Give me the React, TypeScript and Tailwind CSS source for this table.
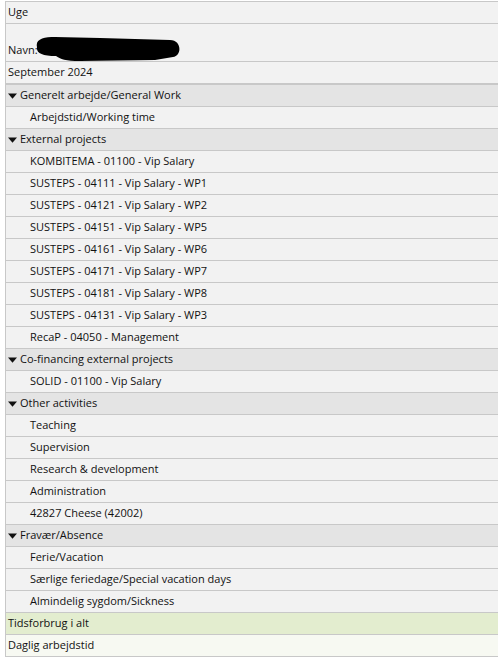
import React from "react";

type Row =
  | { kind: "group"; label: string }
  | { kind: "item"; label: string };

const rows: Row[] = [
  { kind: "group", label: "Generelt arbejde/General Work" },
  { kind: "item", label: "Arbejdstid/Working time" },
  { kind: "group", label: "External projects" },
  { kind: "item", label: "KOMBITEMA - 01100 - Vip Salary" },
  { kind: "item", label: "SUSTEPS - 04111 - Vip Salary - WP1" },
  { kind: "item", label: "SUSTEPS - 04121 - Vip Salary - WP2" },
  { kind: "item", label: "SUSTEPS - 04151 - Vip Salary - WP5" },
  { kind: "item", label: "SUSTEPS - 04161 - Vip Salary - WP6" },
  { kind: "item", label: "SUSTEPS - 04171 - Vip Salary - WP7" },
  { kind: "item", label: "SUSTEPS - 04181 - Vip Salary - WP8" },
  { kind: "item", label: "SUSTEPS - 04131 - Vip Salary - WP3" },
  { kind: "item", label: "RecaP - 04050 - Management" },
  { kind: "group", label: "Co-financing external projects" },
  { kind: "item", label: "SOLID - 01100 - Vip Salary" },
  { kind: "group", label: "Other activities" },
  { kind: "item", label: "Teaching" },
  { kind: "item", label: "Supervision" },
  { kind: "item", label: "Research & development" },
  { kind: "item", label: "Administration" },
  { kind: "item", label: "42827 Cheese (42002)" },
  { kind: "group", label: "Fravær/Absence" },
  { kind: "item", label: "Ferie/Vacation" },
  { kind: "item", label: "Særlige feriedage/Special vacation days" },
  { kind: "item", label: "Almindelig sygdom/Sickness" },
];

function Caret() {
  return (
    <svg width="11" height="6" viewBox="0 0 11 6" className="mr-px shrink-0">
      <path d="M0 0.5 L9 0.5 L4.5 5.8 Z" fill="#111" />
    </svg>
  );
}

function Blob() {
  return (
    <svg
      width="150"
      height="28"
      viewBox="0 0 150 28"
      className="absolute left-[24px] top-[12px]"
    >
      <path
        d="M7,11 C5,3 14,1 25,1 L70,2 L140,4 C152,4 152,20 143,21 L125,24 L50,25 C36,25 30,23 26,20 C12,20 6,17 7,11 Z"
        fill="#000"
      />
    </svg>
  );
}

export default function App() {
  return (
    <div className="w-[498px] h-[662px] bg-white pt-px pl-[5px] font-['Open_Sans',sans-serif] text-[11px] text-[#111] overflow-hidden">
      <div className="border-l border-[#c8c8c8]">
        <div className="h-[23px] border-y border-[#c8c8c8] bg-[#f2f2f2] flex items-center pl-[2px]">
          Uge
        </div>
        <div className="relative h-[38px] border-b border-[#c8c8c8] bg-[#f2f2f2] flex items-end pb-[3px] pl-[2px]">
          <span>Navn:</span>
          <Blob />
        </div>
        <div className="h-[23px] border-b-2 border-[#c8c8c8] bg-[#f2f2f2] flex items-center pl-[2px]">
          September 2024
        </div>
        {rows.map((r, i) =>
          r.kind === "group" ? (
            <div
              key={i}
              className="h-[22px] border-b border-[#c8c8c8] bg-[#e4e4e4] flex items-center pl-[2px]"
            >
              <Caret />
              {r.label}
            </div>
          ) : (
            <div
              key={i}
              className="h-[22px] border-b border-[#c8c8c8] bg-[#f2f2f2] flex items-center pl-[24px]"
            >
              {r.label}
            </div>
          )
        )}
        <div className="h-[22px] border-b border-[#c8c8c8] bg-[#e3edcf] flex items-center pl-[2px]">
          Tidsforbrug i alt
        </div>
        <div className="h-[22px] border-b border-[#c8c8c8] bg-[#f7f9f2] flex items-center pl-[2px]">
          Daglig arbejdstid
        </div>
      </div>
    </div>
  );
}
